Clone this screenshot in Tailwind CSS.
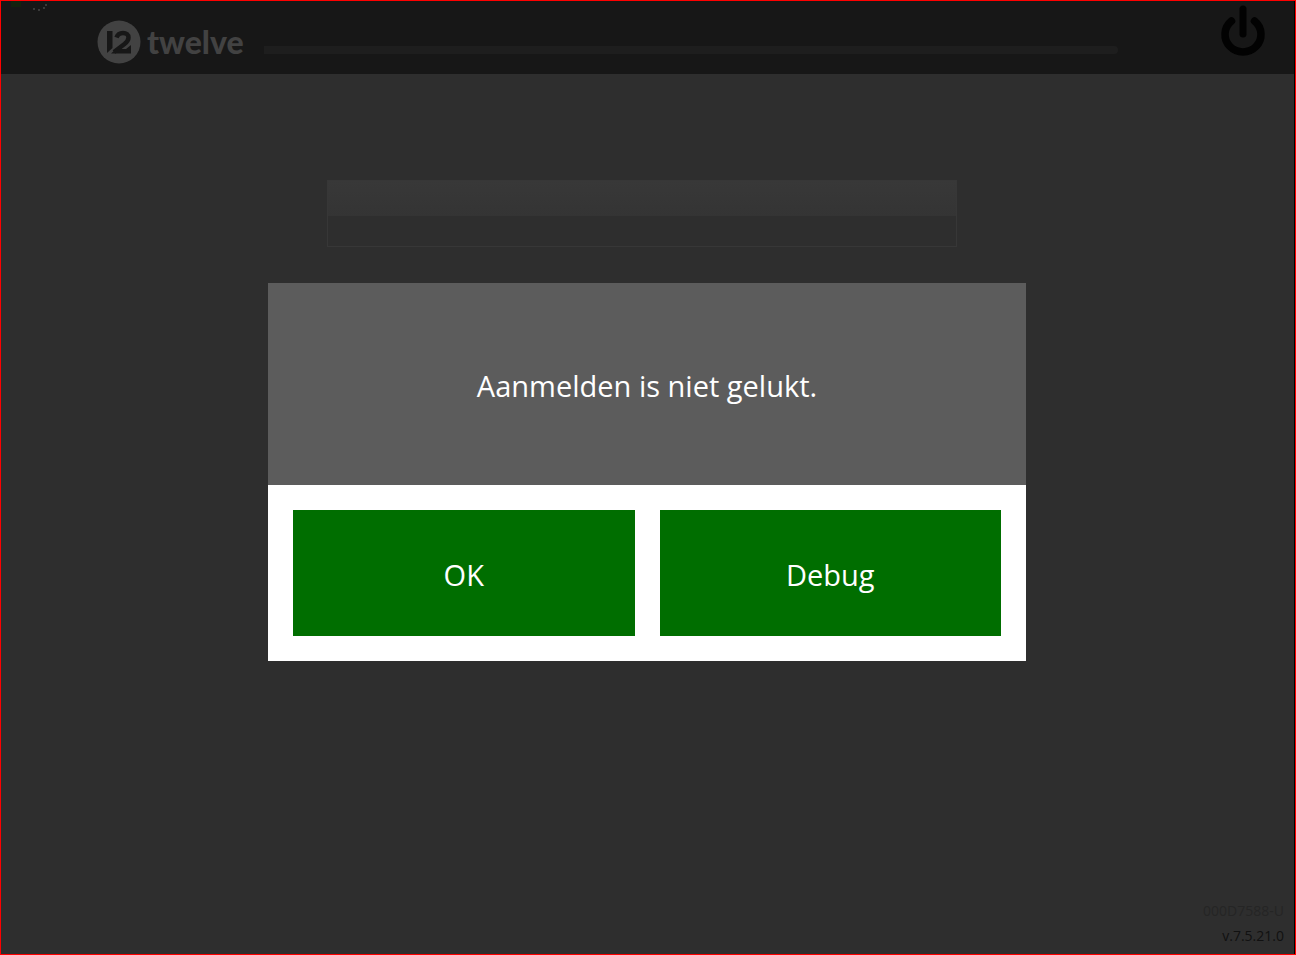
<!DOCTYPE html>
<html lang="nl">
  <head>
    <meta charset="UTF-8" />
    <meta name="viewport" content="width=device-width, initial-scale=1.0" />
    <script src="https://cdn.jsdelivr.net/npm/@tailwindcss/browser@4"></script>
    <title>Twelve</title>
  </head>
  <body class="bg-black font-['Open_Sans',sans-serif]">
    <div class="relative flex flex-col min-h-screen border border-[#ff0000] bg-[#2e2e2e]">
      <!-- Status specks -->
      <svg class="absolute top-0 left-0 w-12 h-3" viewBox="0 0 48 12" aria-hidden="true">
        <path d="M10 0h10v6h-10z" fill="#14220f" />
        <path d="M32 7h2v2h-2zM37 8h2v2h-2zM42 6h2v2h-2zM44 3h2v2h-2z" fill="#3a3a3a" />
      </svg>

      <!-- Header -->
      <header class="flex items-center h-[73px] pl-24 pr-7 bg-[#171717] border-r border-black">
        <a href="#" class="flex items-center gap-1.5 mt-2 text-[#424242]">
          <svg class="size-11" viewBox="0 0 44 44">
            <circle cx="22" cy="22" r="21.5" fill="currentColor" />
            <path d="M10 11h5.500v17L10 33z" fill="#171717" />
            <path
              d="M19.500 17.500c1-3 3.500-4.500 6.500-4.500 3.500 0 5.500 2 5.500 4.500 0 3-1.500 4.500-4 6.500L17 32"
              fill="none"
              stroke="#171717"
              stroke-width="4.500"
            />
            <path d="M14 33.500l5-4.500h10l5-4v8.500z" fill="#171717" />
          </svg>
          <span class="font-['Lato',sans-serif] text-[32px] leading-8 font-black">twelve</span>
        </a>
        <div class="grow h-2 mt-6 ml-5 mr-25 rounded-r-sm bg-[#1e1e1e]"></div>
        <button type="button" aria-label="Afsluiten" class="self-start mt-1">
          <svg
            class="w-12 h-13"
            viewBox="0 0 48 52"
            fill="none"
            stroke="#020202"
            stroke-linecap="round"
          >
            <path d="M25 4v25" stroke-width="7" />
            <path d="M13.500 16a18 17.500 0 1 0 23 0" stroke-width="7.500" />
          </svg>
        </button>
      </header>

      <!-- Login field -->
      <main class="grow flex flex-col items-center pt-[106px] pr-3 border-r border-black">
        <input
          type="text"
          aria-label="Aanmelden"
          class="w-[630px] max-w-full h-[67px] px-4 border border-[#373737] bg-linear-to-b from-[#383838] from-0% via-[#343434] via-54% to-[#2e2e2e] to-54% text-[#5c5c5c]"
        />
      </main>

      <footer class="flex flex-col items-end gap-1 pr-2.5 pb-2 border-r border-black text-sm leading-[21px]">
        <p class="text-[#252525]">000D7588-U</p>
        <p class="text-[#111111]">v.7.5.21.0</p>
      </footer>

      <!-- Dialog -->
      <div class="absolute inset-0 flex items-center justify-center pb-3 pr-0.5">
        <div
          role="alertdialog"
          aria-labelledby="message"
          class="w-[758px] max-w-full bg-white text-[29px] leading-9 text-white"
        >
          <div class="flex items-center justify-center h-[202px] pt-1 bg-[#5c5c5c]">
            <p id="message">Aanmelden is niet gelukt.</p>
          </div>
          <div class="grid grid-cols-2 gap-[25px] p-[25px]">
            <button type="button" class="h-[126px] pt-1 bg-[#006e00]">OK</button>
            <button type="button" class="h-[126px] pt-1 bg-[#006e00]">Debug</button>
          </div>
        </div>
      </div>
    </div>
  </body>
</html>
